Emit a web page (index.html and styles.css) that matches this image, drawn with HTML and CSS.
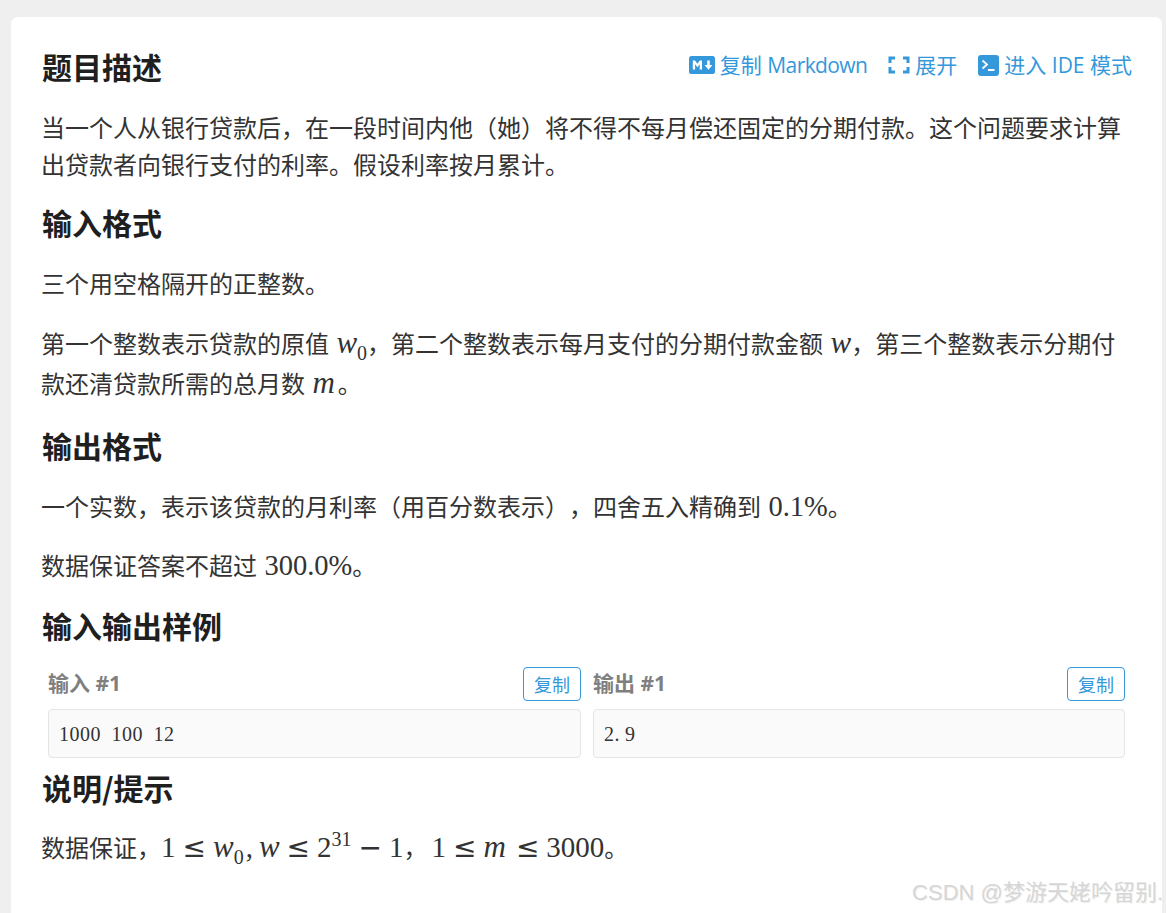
FILE: index.html
```html
<!DOCTYPE html>
<html lang="zh-CN">
<head>
<meta charset="utf-8">
<title>题目描述</title>
<link rel="stylesheet" href="styles.css">
</head>
<body>
<main class="card">
  <header class="top">
    <h2 class="title">题目描述</h2>
    <nav class="actions">
      <a class="action">
        <svg class="ico-md" viewBox="0 0 26 18" aria-hidden="true"><rect width="26" height="18" rx="2.5" fill="#3498db"/><path d="M3.8 13.5V4.5H6l2.4 3.2 2.4-3.2H13v9h-2.3V8.2L8.4 11.2 6.1 8.2v5.3z" fill="#fff"/><path d="M18.2 4.5h2.6v4.6h2.6l-3.9 4.6-3.9-4.6h2.6z" fill="#fff"/></svg>
        <span>复制 <span class="tight">Markdown</span></span>
      </a>
      <a class="action">
        <svg class="ico-fs" viewBox="0 0 22 18" aria-hidden="true"><path d="M7 2H2v5M15 2h5v5M7 16H2v-5M15 16h5v-5" fill="none" stroke="#3498db" stroke-width="3"/></svg>
        <span>展开</span>
      </a>
      <a class="action">
        <svg class="ico-term" viewBox="0 0 21 21" aria-hidden="true"><rect width="21" height="21" rx="3" fill="#3498db"/><path d="M4.5 5.5l4.5 4-4.5 4" fill="none" stroke="#fff" stroke-width="1.8"/><path d="M10 15h6.5" stroke="#fff" stroke-width="1.8"/></svg>
        <span>进入 IDE 模式</span>
      </a>
    </nav>
  </header>

  <p class="para first">当一个人从银行贷款后，在一段时间内他（她）将不得不每月偿还固定的分期付款。这个问题要求计算出贷款者向银行支付的利率。假设利率按月累计。</p>

  <h2 class="heading">输入格式</h2>
  <p class="para">三个用空格隔开的正整数。</p>
  <p class="para math-lines">第一个整数表示贷款的原值 <span class="m"><i>w</i><sub>0</sub></span>，第二个整数表示每月支付的分期付款金额 <span class="m"><i>w</i></span>，第三个整数表示分期付款还清贷款所需的总月数 <span class="m"><i class="mi">m</i></span>。</p>

  <h2 class="heading">输出格式</h2>
  <p class="para">一个实数，表示该贷款的月利率（用百分数表示），四舍五入精确到 <span class="m num">0.1%</span>。</p>
  <p class="para">数据保证答案不超过 <span class="m num">300.0%</span>。</p>

  <h2 class="heading">输入输出样例</h2>
  <section class="samples">
    <div class="sample">
      <div class="sample-head"><span class="sample-label">输入 #1</span><button class="copy">复制</button></div>
      <pre class="sample-box">1000 100 12</pre>
    </div>
    <div class="sample">
      <div class="sample-head"><span class="sample-label">输出 #1</span><button class="copy">复制</button></div>
      <pre class="sample-box">2<span class="dot">.</span>9</pre>
    </div>
  </section>

  <h2 class="heading hint">说明/提示</h2>
  <p class="para">数据保证，<span class="m lead">1<span class="rel">≤</span><i>w</i><sub>0</sub><span class="comma">,</span><i>w</i><span class="rel">≤</span>2<sup>31</sup><span class="rel">−</span>1</span>，<span class="m group">1<span class="rel">≤</span><i class="mi">m</i><span class="rel">≤</span>3000</span>。</p>
</main>
<div class="watermark">CSDN @梦游天姥吟留别.</div>
</body>
</html>
```
FILE: styles.css
```css
* { box-sizing: border-box; }
html, body { margin: 0; height: 913px; overflow: hidden; }
body {
  background: #efefef;
  padding: 17px 4px 0 11px;
  font-family: "Open Sans", "Noto Sans CJK SC", sans-serif;
  color: #333;
  font-size: 24px;
  text-spacing-trim: space-all;
}
.card {
  background: #fff;
  border-radius: 7px 7px 0 0;
  height: 896px;
  padding: 29px 30px 0 30px;
  overflow: hidden;
}
.top { display: flex; justify-content: space-between; align-items: flex-start; height: 42px; }
.title, .heading { margin: 0; padding-left: 1px; font-size: 30px; line-height: 40px; font-weight: 700; color: #1f1f1f; font-family: "Noto Sans CJK SC", sans-serif; }
.actions { display: flex; gap: 21px; margin-top: 4px; }
.action { display: flex; align-items: center; gap: 5px; color: #3498db; font-size: 21px; line-height: 30px; }
.tight { letter-spacing: -0.6px; }
.ico-md { width: 26px; height: 18px; }
.ico-fs { width: 22px; height: 18px; }
.ico-term { width: 21px; height: 21px; }

.para { margin: 0 0 22px; font-size: 24px; line-height: 37px; font-family: "Noto Sans CJK SC", sans-serif; }
.first { margin-top: 20px; margin-bottom: 20px; }
.heading { margin-bottom: 22px; }
.math-lines { line-height: 40px; }

.m { font-family: "Liberation Serif", serif; font-size: 29px; line-height: 1; margin: 0 0 0 2px; }
.m i { font-style: italic; font-size: 31px; }
.m .mi { letter-spacing: 3px; }
.m sub, .m sup { font-size: 20px; line-height: 0; }
.num { font-size: 28.5px; margin: 0 0 0 2px; }
.lead { margin-left: 0; }
.group { margin-left: 4px; }
.rel { font-family: "DejaVu Sans", sans-serif; font-size: 28px; margin: 0 7px; }
.comma { margin: 0 6px 0 2px; }

.samples { display: grid; grid-template-columns: 533px 532px; gap: 12px; margin: 0 7px 9px 7px; }
.sample-head { display: flex; justify-content: space-between; align-items: center; height: 34px; margin-bottom: 8px; }
.sample-label { font-size: 21px; font-weight: 700; color: #7f7f7f; margin-bottom: 4px; }
.copy {
  width: 58px; height: 34px; padding: 0;
  background: #fff; border: 1px solid #3498db; border-radius: 4px;
  color: #3498db; font: 18px "Noto Sans CJK SC", sans-serif;
}
.sample-box {
  margin: 0; height: 49px; padding: 0 10px;
  background: #fafafa; border: 1px solid #e5e5e5; border-radius: 4px;
  font: 20px/48px "Liberation Serif", serif; letter-spacing: 0.5px; word-spacing: 5px; color: #333;
}
.dot { letter-spacing: 5.5px; }
.hint { margin-bottom: 21px; }

.watermark {
  position: absolute; right: 3px; bottom: 5px;
  font-family: "Liberation Sans", "Noto Sans CJK SC", sans-serif;
  font-size: 22px; line-height: 30px; color: #d6d6d6;
  text-shadow: 1px 1px 1px #eee;
}
```
